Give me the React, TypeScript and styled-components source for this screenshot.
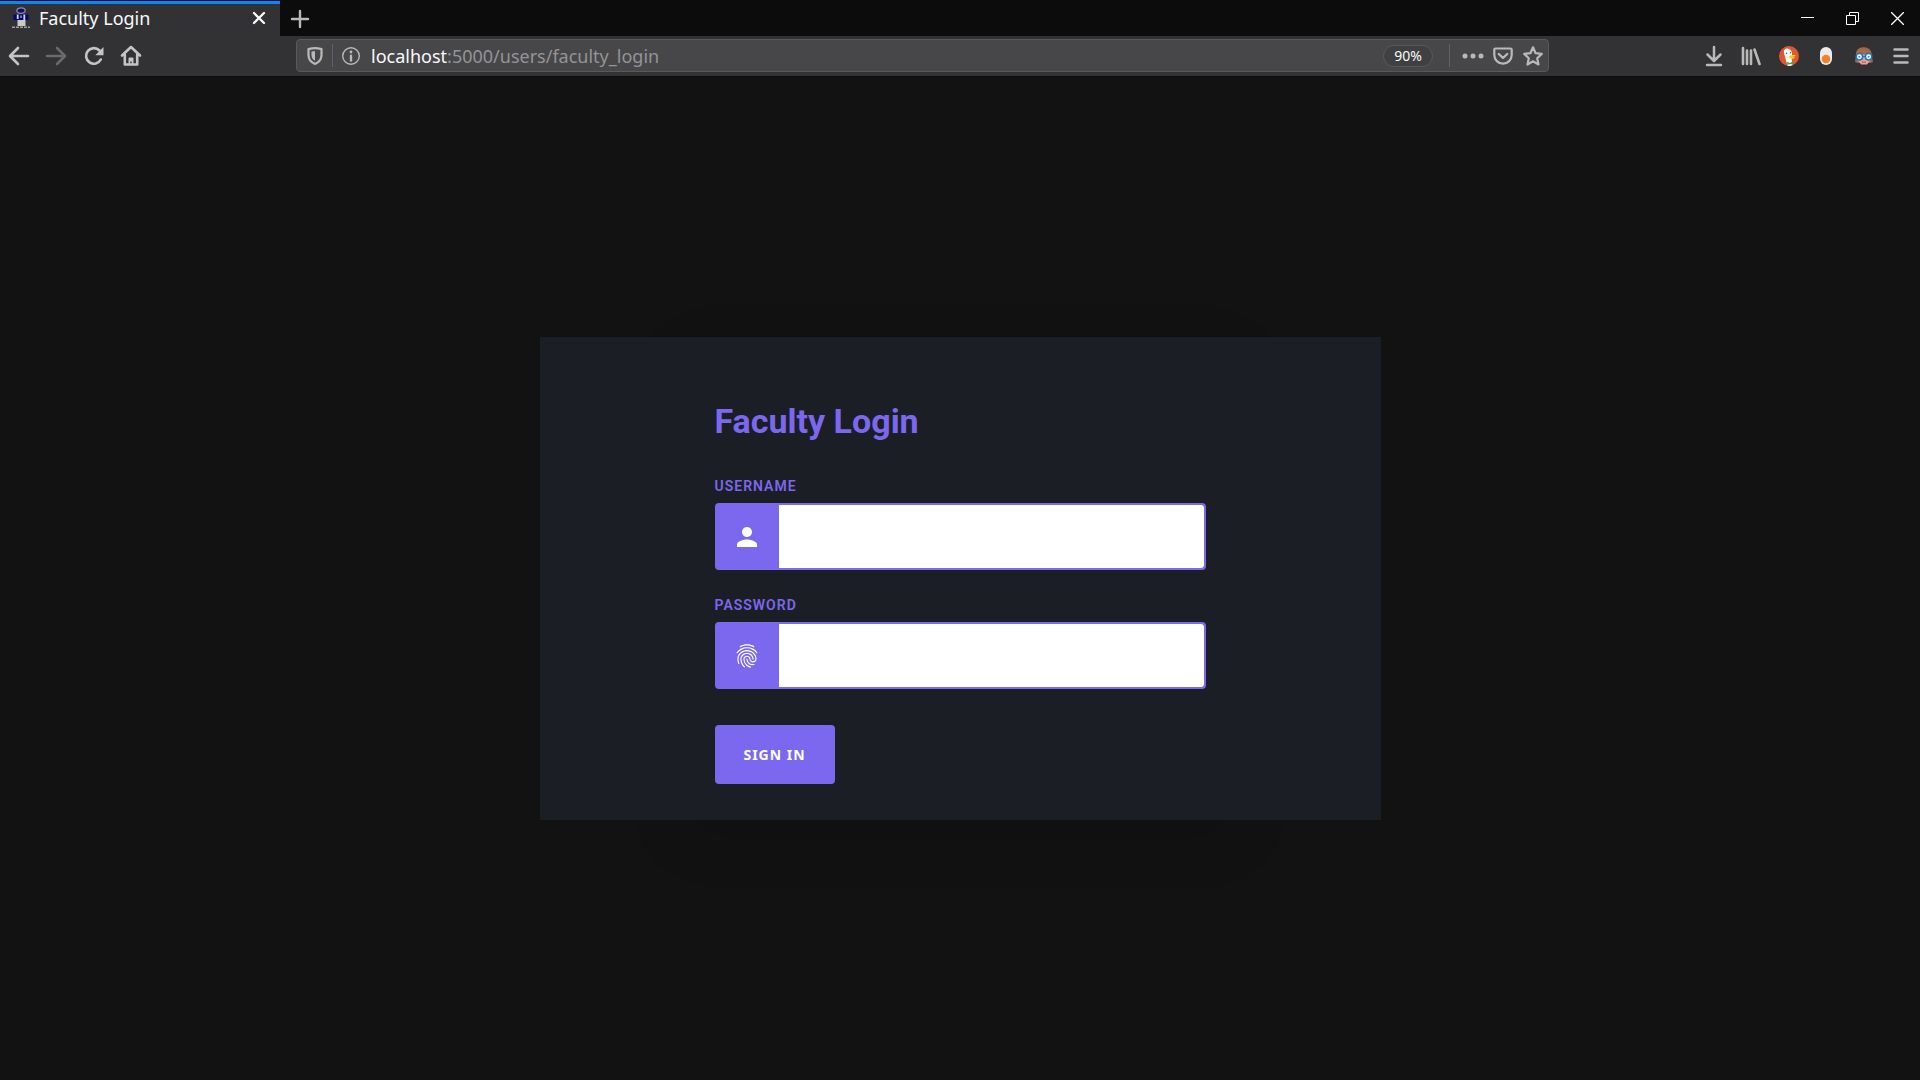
import React from 'react';
import styled, { createGlobalStyle } from 'styled-components';
import { MdPerson, MdFingerprint } from 'react-icons/md';

const GlobalStyle = createGlobalStyle`
  *, *::before, *::after { box-sizing: border-box; }
  html, body, #root { height: 100%; }
  body { margin: 0; background: #121212; }
  button, input { font: inherit; }
`;

const Window = styled.div`
  display: flex;
  flex-direction: column;
  min-height: 100%;
  font-family: "Noto Sans", sans-serif;
`;

const TitleBar = styled.header`
  display: flex;
  height: 36px;
  padding-top: 1px;
  background: #0c0c0c;
`;

const Tab = styled.div`
  display: flex;
  align-items: center;
  width: 280px;
  padding: 0 12px 4px 11px;
  background: #323234;
  border-top: 3px solid #0a84ff;
  color: #f9f9fa;
  font-size: 18px;
  line-height: 24px;
`;

const TabTitle = styled.span`
  flex: 1;
  margin-left: 8px;
`;

const IconButton = styled.button<{ $width?: number; $color?: string }>`
  display: flex;
  flex: ${(p) => (p.$width ? 'none' : '1')};
  align-items: center;
  justify-content: center;
  width: ${(p) => (p.$width ? `${p.$width}px` : 'auto')};
  padding: 0;
  border: 0;
  background: none;
  color: ${(p) => p.$color ?? '#b9b9ba'};
  svg { display: block; flex: none; }
`;

const WindowControls = styled.div`
  display: flex;
  margin-left: auto;
`;

const Toolbar = styled.nav`
  display: flex;
  align-items: center;
  height: 41px;
  padding-bottom: 1px;
  background: #323234;
  border-bottom: 1px solid #0c0c0d;
`;

const ButtonGroup = styled.div<{ $width: number; $before?: number; $after?: number }>`
  display: flex;
  flex: none;
  width: ${(p) => p.$width}px;
  margin-left: ${(p) => p.$before ?? 0}px;
  margin-right: ${(p) => p.$after ?? 0}px;
`;

const AddressBar = styled.div`
  display: flex;
  align-items: center;
  flex: 1;
  height: 33px;
  padding: 0 0 0 6px;
  background: #474749;
  border: 1px solid #59595b;
  border-radius: 4px;
`;

const Divider = styled.span`
  width: 1px;
  height: 23px;
  margin: 0 8px 0 5px;
  background: #5f6069;
`;

const Url = styled.span`
  flex: 1;
  margin-left: 10px;
  color: #949495;
  font-size: 18px;
  line-height: 24px;
`;

const Host = styled.span`
  color: #f9f9fa;
`;

const ZoomLevel = styled.button`
  height: 22px;
  width: 50px;
  margin-right: 11px;
  padding: 0;
  border: 1px solid #58585a;
  border-radius: 11px;
  background: #404042;
  color: #f9f9fa;
  font-size: 14px;
  line-height: 20px;
`;

const Page = styled.main`
  position: relative;
  z-index: 0;
  display: flex;
  flex: 1;
  align-items: center;
  justify-content: center;
  background: #121212;
`;

const Card = styled.form`
  position: relative;
  display: flex;
  flex-direction: column;
  align-items: flex-start;
  width: 100%;
  max-width: 841px;
  padding: 62px 175px 36px;
  background: #1b1e25;
  font-family: Roboto, sans-serif;

  &::before {
    content: "";
    position: absolute;
    z-index: -1;
    inset: 0 144px;
    box-shadow: 0 18px 54px rgba(0, 0, 0, 0.12);
  }
`;

const Title = styled.h1`
  margin: 0 0 33px;
  color: #7b68ee;
  font-size: 34px;
  font-weight: 700;
  line-height: 44px;
`;

const Field = styled.div`
  width: 100%;
  margin-bottom: 25px;
`;

const Label = styled.label`
  display: block;
  margin-bottom: 7px;
  color: #7b68ee;
  font-size: 14px;
  font-weight: 600;
  letter-spacing: 1px;
  line-height: 20px;
`;

const InputGroup = styled.div`
  display: flex;
  height: 67px;
  overflow: hidden;
  border: 2px solid #7b68ee;
  border-radius: 4px;
  background: #7b68ee;
`;

const InputIcon = styled.span<{ $size: number }>`
  display: flex;
  align-items: center;
  justify-content: center;
  width: 62px;
  padding-right: 2px;
  color: #ffffff;
  font-size: ${(p) => p.$size}px;
`;

const TextInput = styled.input`
  flex: 1;
  min-width: 0;
  padding: 0 20px;
  border: 0;
  border-radius: 0 3px 3px 0;
  outline: 0;
  background: #ffffff;
  font-size: 16px;
`;

const SubmitButton = styled.button`
  width: 120px;
  height: 59px;
  margin-top: 11px;
  padding: 0;
  border: 0;
  border-radius: 4px;
  background: #7b68ee;
  color: #ffffff;
  font-family: "Noto Sans", sans-serif;
  font-size: 14px;
  font-weight: 700;
  letter-spacing: 1px;
`;

const line = { fill: 'none', stroke: 'currentColor', strokeWidth: 2, strokeLinecap: 'round', strokeLinejoin: 'round' } as const;

const Favicon = () => (
  <svg width="20" height="22" viewBox="0 0 20 22">
    <path d="M6.500 13h8v6h-8z" fill="#c9c9c9" />
    <ellipse cx="10" cy="3.600" rx="4.200" ry="2.800" fill="#10106e" stroke="#8c8c9c" strokeWidth="1.300" />
    <path d="M2.500 7.500h15v5.500h-15z" fill="#050578" />
    <path d="M6.700 7.500v4.500M13.300 7.500v5.500" stroke="#d4d4e4" strokeWidth="1.800" />
    <path d="M10 8.500v2.500" stroke="#9c9cc0" strokeWidth="1.500" />
    <path d="M1 20.300h18" stroke="#a0a0a0" strokeWidth="1.500" strokeDasharray="3 1" />
  </svg>
);

const CloseTabIcon = () => (
  <svg width="18" height="18" viewBox="0 0 18 18"><path {...line} strokeWidth={2.300} d="M4 4l10 10M14 4L4 14" /></svg>
);
const PlusIcon = () => (
  <svg width="20" height="20" viewBox="0 0 20 20"><path {...line} strokeWidth={2.400} d="M10 2v16M2 10h16" /></svg>
);
const MinimizeIcon = () => (
  <svg width="13" height="13" viewBox="0 0 13 13"><path d="M0 5.500h13" stroke="currentColor" /></svg>
);
const RestoreIcon = () => (
  <svg width="13" height="13" viewBox="0 0 13 13" fill="none" stroke="currentColor"><path d="M.5 3.500h9v9h-9zM3.500 3.500v-3h9v9h-3" /></svg>
);
const CloseIcon = () => (
  <svg width="13" height="13" viewBox="0 0 13 13" fill="none" stroke="currentColor" strokeWidth="1.300"><path d="M0 0l13 13M13 0L0 13" /></svg>
);
const BackIcon = () => (
  <svg width="22" height="20" viewBox="0 0 22 20"><path {...line} strokeWidth={2.600} d="M20 10H2.500M10 2L2 10l8 8" /></svg>
);
const ForwardIcon = () => (
  <svg width="22" height="20" viewBox="0 0 22 20"><path {...line} strokeWidth={2.600} d="M2 10h17.500M12 2l8 8-8 8" /></svg>
);
const ReloadIcon = () => (
  <svg width="22" height="20" viewBox="0 0 22 20">
    <path {...line} strokeWidth={2.600} d="M17.800 13.500A7.800 7.800 0 1 1 16.500 4.500" />
    <path d="M20.500 1v8.200h-8.200z" fill="currentColor" />
  </svg>
);
const HomeIcon = () => (
  <svg width="22" height="22" viewBox="0 0 22 22">
    <path {...line} strokeWidth={2.600} d="M2 10.500L11 2l9 8.500M4.800 9.500v10h12.400v-10" />
    <path d="M8.500 19v-5.500a1 1 0 0 1 1-1h3a1 1 0 0 1 1 1V19h-1.800v-2.500h-1.400V19z" fill="currentColor" />
  </svg>
);
const ShieldIcon = () => (
  <svg width="18" height="20" viewBox="0 0 18 20">
    <path {...line} strokeWidth={2.200} d="M9 2.200c2.200 0 4.200.3 6.500.9v6.200c0 4-2.500 7-6.500 8.600-4-1.600-6.500-4.600-6.500-8.600V3.100C4.800 2.500 6.800 2.200 9 2.200z" />
    <path d="M9 5.200v9.600c-2.200-1.200-3.500-3.200-3.500-5.600V5.600C6.600 5.300 7.800 5.200 9 5.200z" fill="currentColor" />
  </svg>
);
const InfoIcon = () => (
  <svg width="20" height="20" viewBox="0 0 20 20">
    <circle cx="10" cy="10" r="8.300" fill="none" stroke="currentColor" strokeWidth="1.400" />
    <circle cx="10" cy="6" r="1.400" fill="currentColor" />
    <path d="M10 9.800v4.700" stroke="currentColor" strokeWidth="2.400" strokeLinecap="round" />
  </svg>
);
const DotsIcon = () => (
  <svg width="22" height="6" viewBox="0 0 22 6" fill="currentColor"><circle cx="3" cy="3" r="2.500" /><circle cx="11" cy="3" r="2.500" /><circle cx="19" cy="3" r="2.500" /></svg>
);
const PocketIcon = () => (
  <svg width="22" height="20" viewBox="0 0 22 20">
    <path {...line} strokeWidth={2.200} d="M3.500 2.500h15a1.200 1.200 0 0 1 1.200 1.200V9a8.700 8.700 0 0 1-17.400 0V3.700a1.200 1.200 0 0 1 1.200-1.200z" />
    <path {...line} strokeWidth={2.400} d="M6.800 8l4.200 4 4.200-4" />
  </svg>
);
const StarIcon = () => (
  <svg width="22" height="22" viewBox="0 0 22 22"><path {...line} strokeWidth={2.200} d="M11 2.300l2.600 5.900 6.200.7-4.600 4.300 1.300 6.300-5.500-3.200-5.500 3.200 1.300-6.300-4.600-4.300 6.200-.7z" /></svg>
);
const DownloadIcon = () => (
  <svg width="18" height="22" viewBox="0 0 18 22"><path {...line} strokeWidth={2.500} d="M9 2v13M2.500 9.500L9 16l6.500-6.500M2 20h14" /></svg>
);
const LibraryIcon = () => (
  <svg width="20" height="20" viewBox="0 0 20 20"><path {...line} strokeWidth={2.600} d="M2 2v16M6 4.500V18M10 4.500V18M13.500 3.500L18.500 18" /></svg>
);
const DuckIcon = () => (
  <svg width="20" height="20" viewBox="0 0 20 20">
    <circle cx="10" cy="10" r="10" fill="#de5833" />
    <path d="M5 5.200C5.200 3 7.500 2 9.500 2.800c2.600.9 3.600 3 3.600 6l-.4 5 .8 5.500a10 10 0 0 1-5 .5C7.500 16 6.300 11.500 5.600 9 5 7.300 4.700 6.300 5 5.200z" fill="#fff" />
    <path d="M10.500 9.700c2-.9 4.300-.9 6.300-.3-.8 1.100-2.500 1.200-3.500 1.600 1.200.4 2.300.2 2.800.5-.8 1.600-4.600 1.700-5.800.2-.4-.7-.3-1.500.2-2z" fill="#fdd20a" />
    <path d="M8 15.800l2.800 1.100 3-1.500.3 3.400-2.800-.8-2.900 1z" fill="#43a347" />
    <circle cx="7.500" cy="7.200" r=".8" fill="#2d4f8e" /><circle cx="11.500" cy="6.800" r=".7" fill="#2d4f8e" />
  </svg>
);
const PillIcon = () => (
  <svg width="14" height="20" viewBox="0 0 14 20"><rect x="1" y="1" width="12" height="18" rx="6" fill="#ececec" /><circle cx="7" cy="13" r="4.300" fill="#f5802a" /></svg>
);
const GlassesIcon = () => (
  <svg width="20" height="20" viewBox="0 0 20 20">
    <path d="M2 10C1.500 5 4 1.200 9 1.200c6-.5 9 3.300 8.700 8.800l1.300 6-3 1H4l-3-1z" fill="#a5673f" />
    <path d="M4 8.500l7-4 5 4v6.200L13 18.500H7.200L4 14.700z" fill="#e8a18a" />
    <path d="M3 6C7 7 11 5.500 12.500 2.500L17 6.500v2H3z" fill="#a5673f" />
    <circle cx="5.400" cy="10.800" r="3.200" fill="#ffffff" stroke="#1477d4" strokeWidth="1.500" />
    <circle cx="14.600" cy="10.800" r="3.200" fill="#ffffff" stroke="#1477d4" strokeWidth="1.500" />
    <circle cx="5.400" cy="10.800" r="1" fill="#2f8be0" /><circle cx="14.600" cy="10.800" r="1" fill="#2f8be0" />
    <path d="M8.600 10.500h2.800" stroke="#1477d4" strokeWidth="1.300" /><path d="M8 16.200h4" stroke="#b5524a" />
  </svg>
);
const MenuIcon = () => (
  <svg width="16" height="18" viewBox="0 0 16 18"><path {...line} strokeWidth={2.500} d="M1.500 2.500h13M1.500 9h13M1.500 15.500h13" /></svg>
);

const navButtons = [
  { label: 'Back', icon: <BackIcon />, color: '#c4c4c5' },
  { label: 'Forward', icon: <ForwardIcon />, color: '#6a6a6c' },
  { label: 'Reload', icon: <ReloadIcon />, color: '#c4c4c5' },
  { label: 'Home', icon: <HomeIcon />, color: '#c4c4c5' },
];

const toolButtons = [
  { label: 'Downloads', icon: <DownloadIcon /> },
  { label: 'Library', icon: <LibraryIcon /> },
  { label: 'Privacy', icon: <DuckIcon /> },
  { label: 'Toggle', icon: <PillIcon /> },
  { label: 'Reader', icon: <GlassesIcon /> },
  { label: 'Menu', icon: <MenuIcon /> },
];

const fields = [
  { id: 'username', label: 'USERNAME', type: 'text', icon: <MdPerson />, size: 30 },
  { id: 'password', label: 'PASSWORD', type: 'password', icon: <MdFingerprint />, size: 28 },
];

export default function App() {
  return (
    <Window>
      <GlobalStyle />
      <TitleBar>
        <Tab>
          <Favicon />
          <TabTitle>Faculty Login</TabTitle>
          <IconButton $width={18} $color="#f9f9fa" aria-label="Close tab"><CloseTabIcon /></IconButton>
        </Tab>
        <IconButton $width={40} aria-label="New tab"><PlusIcon /></IconButton>
        <WindowControls>
          <IconButton $width={45} $color="#ffffff" aria-label="Minimize"><MinimizeIcon /></IconButton>
          <IconButton $width={45} $color="#ffffff" aria-label="Restore"><RestoreIcon /></IconButton>
          <IconButton $width={45} $color="#ffffff" aria-label="Close"><CloseIcon /></IconButton>
        </WindowControls>
      </TitleBar>
      <Toolbar>
        <ButtonGroup $width={150} $after={146}>
          {navButtons.map((b) => (
            <IconButton key={b.label} $color={b.color} aria-label={b.label}>{b.icon}</IconButton>
          ))}
        </ButtonGroup>
        <AddressBar>
          <IconButton $width={24} aria-label="Tracking protection"><ShieldIcon /></IconButton>
          <Divider />
          <IconButton $width={20} aria-label="Site information"><InfoIcon /></IconButton>
          <Url><Host>localhost</Host>:5000/users/faculty_login</Url>
          <ZoomLevel>90%</ZoomLevel>
          <Divider />
          <IconButton $width={30} aria-label="Page actions"><DotsIcon /></IconButton>
          <IconButton $width={30} aria-label="Save to Pocket"><PocketIcon /></IconButton>
          <IconButton $width={30} aria-label="Bookmark"><StarIcon /></IconButton>
        </AddressBar>
        <ButtonGroup $width={225} $before={146}>
          {toolButtons.map((b) => (
            <IconButton key={b.label} aria-label={b.label}>{b.icon}</IconButton>
          ))}
        </ButtonGroup>
      </Toolbar>
      <Page>
        <Card onSubmit={(e) => e.preventDefault()}>
          <Title>Faculty Login</Title>
          {fields.map((f) => (
            <Field key={f.id}>
              <Label htmlFor={f.id}>{f.label}</Label>
              <InputGroup>
                <InputIcon $size={f.size}>{f.icon}</InputIcon>
                <TextInput id={f.id} name={f.id} type={f.type} />
              </InputGroup>
            </Field>
          ))}
          <SubmitButton type="submit">SIGN IN</SubmitButton>
        </Card>
      </Page>
    </Window>
  );
}
